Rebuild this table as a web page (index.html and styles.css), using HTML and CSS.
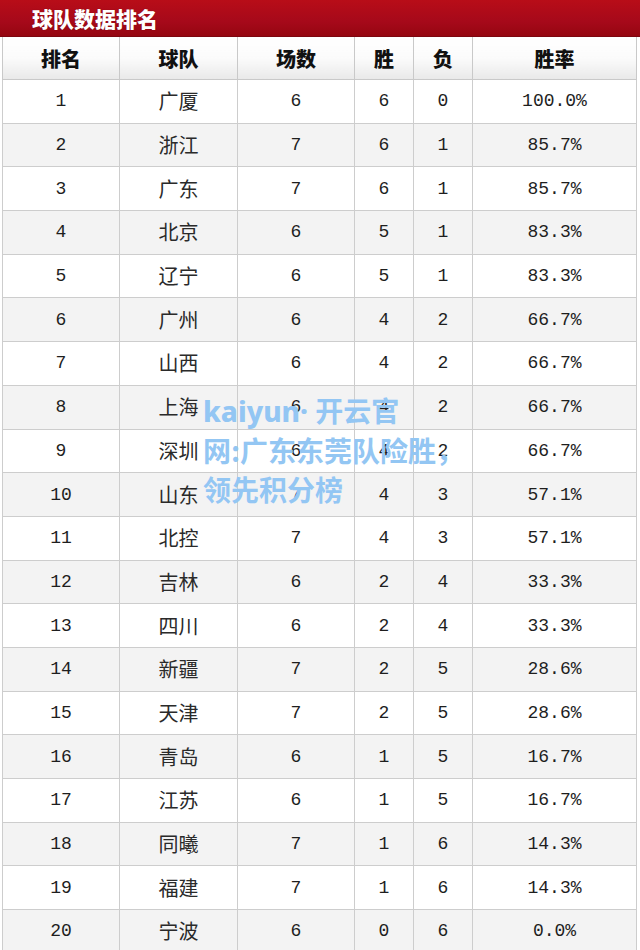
FILE: index.html
```html
<!DOCTYPE html>
<html lang="zh">
<head>
<meta charset="utf-8">
<title>球队数据排名</title>
<link rel="stylesheet" href="styles.css">
</head>
<body>
<div class="page">
  <div class="title-bar"><span class="title">球队数据排名</span></div>
  <table class="rank">
    <colgroup>
      <col class="c1"><col class="c2"><col class="c3"><col class="c4"><col class="c5"><col class="c6">
    </colgroup>
    <thead>
      <tr><th>排名</th><th>球队</th><th>场数</th><th>胜</th><th>负</th><th>胜率</th></tr>
    </thead>
    <tbody>
      <tr><td class="n">1</td><td class="t">广厦</td><td class="n">6</td><td class="n">6</td><td class="n">0</td><td class="n">100.0%</td></tr>
      <tr><td class="n">2</td><td class="t">浙江</td><td class="n">7</td><td class="n">6</td><td class="n">1</td><td class="n">85.7%</td></tr>
      <tr><td class="n">3</td><td class="t">广东</td><td class="n">7</td><td class="n">6</td><td class="n">1</td><td class="n">85.7%</td></tr>
      <tr><td class="n">4</td><td class="t">北京</td><td class="n">6</td><td class="n">5</td><td class="n">1</td><td class="n">83.3%</td></tr>
      <tr><td class="n">5</td><td class="t">辽宁</td><td class="n">6</td><td class="n">5</td><td class="n">1</td><td class="n">83.3%</td></tr>
      <tr><td class="n">6</td><td class="t">广州</td><td class="n">6</td><td class="n">4</td><td class="n">2</td><td class="n">66.7%</td></tr>
      <tr><td class="n">7</td><td class="t">山西</td><td class="n">6</td><td class="n">4</td><td class="n">2</td><td class="n">66.7%</td></tr>
      <tr><td class="n">8</td><td class="t">上海</td><td class="n">6</td><td class="n">4</td><td class="n">2</td><td class="n">66.7%</td></tr>
      <tr><td class="n">9</td><td class="t">深圳</td><td class="n">6</td><td class="n">4</td><td class="n">2</td><td class="n">66.7%</td></tr>
      <tr><td class="n">10</td><td class="t">山东</td><td class="n">7</td><td class="n">4</td><td class="n">3</td><td class="n">57.1%</td></tr>
      <tr><td class="n">11</td><td class="t">北控</td><td class="n">7</td><td class="n">4</td><td class="n">3</td><td class="n">57.1%</td></tr>
      <tr><td class="n">12</td><td class="t">吉林</td><td class="n">6</td><td class="n">2</td><td class="n">4</td><td class="n">33.3%</td></tr>
      <tr><td class="n">13</td><td class="t">四川</td><td class="n">6</td><td class="n">2</td><td class="n">4</td><td class="n">33.3%</td></tr>
      <tr><td class="n">14</td><td class="t">新疆</td><td class="n">7</td><td class="n">2</td><td class="n">5</td><td class="n">28.6%</td></tr>
      <tr><td class="n">15</td><td class="t">天津</td><td class="n">7</td><td class="n">2</td><td class="n">5</td><td class="n">28.6%</td></tr>
      <tr><td class="n">16</td><td class="t">青岛</td><td class="n">6</td><td class="n">1</td><td class="n">5</td><td class="n">16.7%</td></tr>
      <tr><td class="n">17</td><td class="t">江苏</td><td class="n">6</td><td class="n">1</td><td class="n">5</td><td class="n">16.7%</td></tr>
      <tr><td class="n">18</td><td class="t">同曦</td><td class="n">7</td><td class="n">1</td><td class="n">6</td><td class="n">14.3%</td></tr>
      <tr><td class="n">19</td><td class="t">福建</td><td class="n">7</td><td class="n">1</td><td class="n">6</td><td class="n">14.3%</td></tr>
      <tr><td class="n">20</td><td class="t">宁波</td><td class="n">6</td><td class="n">0</td><td class="n">6</td><td class="n">0.0%</td></tr>
    </tbody>
  </table>
  <div class="watermark"><span class="latin">kaiyun· </span>开云官<br>网:广东东莞队险胜，<br>领先积分榜</div>
</div>
</body>
</html>
```

FILE: styles.css
```css
html, body {
  margin: 0;
  padding: 0;
  background: #ffffff;
}
.page {
  position: relative;
  width: 640px;
  height: 950px;
  overflow: hidden;
  background: #ffffff;
  font-family: "Noto Sans CJK SC", "Noto Sans", sans-serif;
}
.title-bar {
  height: 36px;
  background: linear-gradient(to bottom, #b80d18 0%, #a6091a 60%, #950611 100%);
  display: flex;
  align-items: center;
  padding-left: 32px;
  border-bottom: 1px solid #7d0610;
}
.title {
  color: #ffffff;
  font-size: 21px;
  font-weight: 900;
  text-shadow: 0 0 1px rgba(0,0,0,0.35);
}
.rank {
  margin-left: 2px;
  width: 634px;
  border-collapse: collapse;
  table-layout: fixed;
}
.c1 { width: 117px; }
.c2 { width: 118px; }
.c3 { width: 117px; }
.c4 { width: 59px; }
.c5 { width: 59px; }
.c6 { width: 164px; }
.rank th {
  height: 42px;
  padding: 0;
  font-size: 20px;
  font-weight: 900;
  color: #111111;
  text-align: center;
  border: 1px solid #c9c9c9;
  border-top: none;
  background: linear-gradient(to bottom, #ffffff 0%, #fbfbfb 50%, #e9e9e9 100%);
}
.rank td {
  height: 42.7px;
  padding: 0;
  text-align: center;
  color: #1e1e1e;
  border: 1px solid #cdcdcd;
  line-height: 24px;
}
.rank tbody tr:nth-child(odd) td { background: #ffffff; }
.rank tbody tr:nth-child(even) td { background: #f3f3f3; }
.rank td.n {
  font-family: "Liberation Mono", "DejaVu Sans Mono", monospace;
  font-size: 18px;
}
.rank td.t {
  font-family: "Noto Sans CJK SC", sans-serif;
  font-size: 20px;
  font-weight: 400;
  color: #2a2a2a;
}
.watermark {
  position: absolute;
  left: 203px;
  top: 391px;
  font-family: "Noto Sans CJK SC", "Noto Sans", sans-serif;
  font-size: 28px;
  line-height: 39px;
  font-weight: 700;
  color: #93c6f3;
  white-space: nowrap;
}
.watermark .latin {
  font-family: "Noto Sans", "Open Sans", sans-serif;
  font-weight: 800;
}
```
